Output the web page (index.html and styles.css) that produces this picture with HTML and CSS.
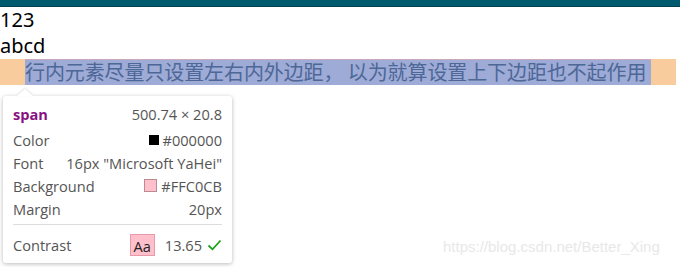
FILE: index.html
```html
<!DOCTYPE html>
<html>
<head>
<meta charset="utf-8">
<link rel="stylesheet" href="styles.css">
</head>
<body>
<div class="topbar"></div>
<div class="content">
  <div class="line">123</div>
  <div class="line">abcd</div>
  <div class="line"><span class="margin"><span class="box">行内元素尽量只设置左右内外边距， 以为就算设置上下边距也不起作用</span></span></div>
</div>
<div class="tooltip">
  <div class="arrow"></div>
  <div class="row head"><span class="tag">span</span><span class="val">500.74 × 20.8</span></div>
  <div class="row"><span class="key">Color</span><span class="val"><i class="sw black"></i>#000000</span></div>
  <div class="row"><span class="key">Font</span><span class="val">16px "Microsoft YaHei"</span></div>
  <div class="row"><span class="key">Background</span><span class="val"><i class="sw pink"></i>#FFC0CB</span></div>
  <div class="row"><span class="key">Margin</span><span class="val">20px</span></div>
  <div class="divider"></div>
  <div class="row"><span class="key">Contrast</span><span class="val"><span class="aa">Aa</span><span class="num">13.65</span><svg class="check" width="15" height="12" viewBox="0 0 15 12"><path d="M1.5 6.5 L5.5 10.3 L13.5 1.5" fill="none" stroke="#1aa31a" stroke-width="1.8"/></svg></span></div>
</div>
<div class="watermark">https://blog.csdn.net/Better_Xing</div>
</body>
</html>
```
FILE: styles.css
```css
html, body { margin: 0; padding: 0; background: #fff; }
body { width: 680px; height: 267px; overflow: hidden; position: relative; }
.topbar { height: 6px; background: #005a6e; border-bottom: 1px solid #00404f; }
.content { font-family: "Noto Sans", "Noto Sans CJK SC", sans-serif; font-size: 20px; color: #000; }
.line { height: 26px; line-height: 26px; white-space: nowrap; }
.margin { display: inline-block; background: #f9cc9d; padding: 0 25px; height: 26px; vertical-align: top; }
.box { display: inline-block; width: 626px; height: 26px; background: #9eabd7; color: #4d6796; font-family: "Noto Sans CJK SC", sans-serif; font-size: 20px; letter-spacing: -0.1px; line-height: 26px; box-shadow: inset 0 1px 0 #c9a7bd; white-space: nowrap; vertical-align: top; }
.tooltip { position: absolute; left: 3px; top: 96px; width: 209px; padding: 4px 10px 0 10px; height: 163px; background: #fff; border-radius: 3px; box-shadow: 0 1px 4px rgba(0,0,0,0.28); font-family: "Open Sans", "Noto Sans", sans-serif; font-size: 14.6px; color: #555; }
.arrow { position: absolute; left: 14px; top: -7px; width: 0; height: 0; border-left: 8px solid transparent; border-right: 8px solid transparent; border-bottom: 7px solid #fff; filter: drop-shadow(0 -1px 1px rgba(0,0,0,0.12)); }
.row { display: flex; justify-content: space-between; align-items: center; height: 23px; white-space: nowrap; }
.head { height: 28px; }
.tag { color: #881280; font-weight: bold; }
.val { display: flex; align-items: center; color: #555; }
.key { color: #555; }
.sw { display: inline-block; width: 10px; height: 10px; margin-right: 4px; box-sizing: border-box; }
.sw.black { background: #000; }
.sw.pink { width: 13px; height: 13px; background: #ffc0cb; border: 1px solid #b98c93; }
.divider { height: 1px; background: #ddd; margin: 4px 0 8px; }
.aa { display: inline-block; width: 25px; height: 22px; line-height: 22px; text-align: center; background: #ffc0cb; border: 1px solid #e79aa8; box-sizing: border-box; color: #222; font-size: 14.6px; margin-right: 10px; }
.num { margin-right: 5px; }
.check { display: block; }
.watermark { position: absolute; left: 443px; top: 238px; font-family: "Liberation Sans", Arial, sans-serif; font-size: 15px; color: #e8e8e8; }
```
